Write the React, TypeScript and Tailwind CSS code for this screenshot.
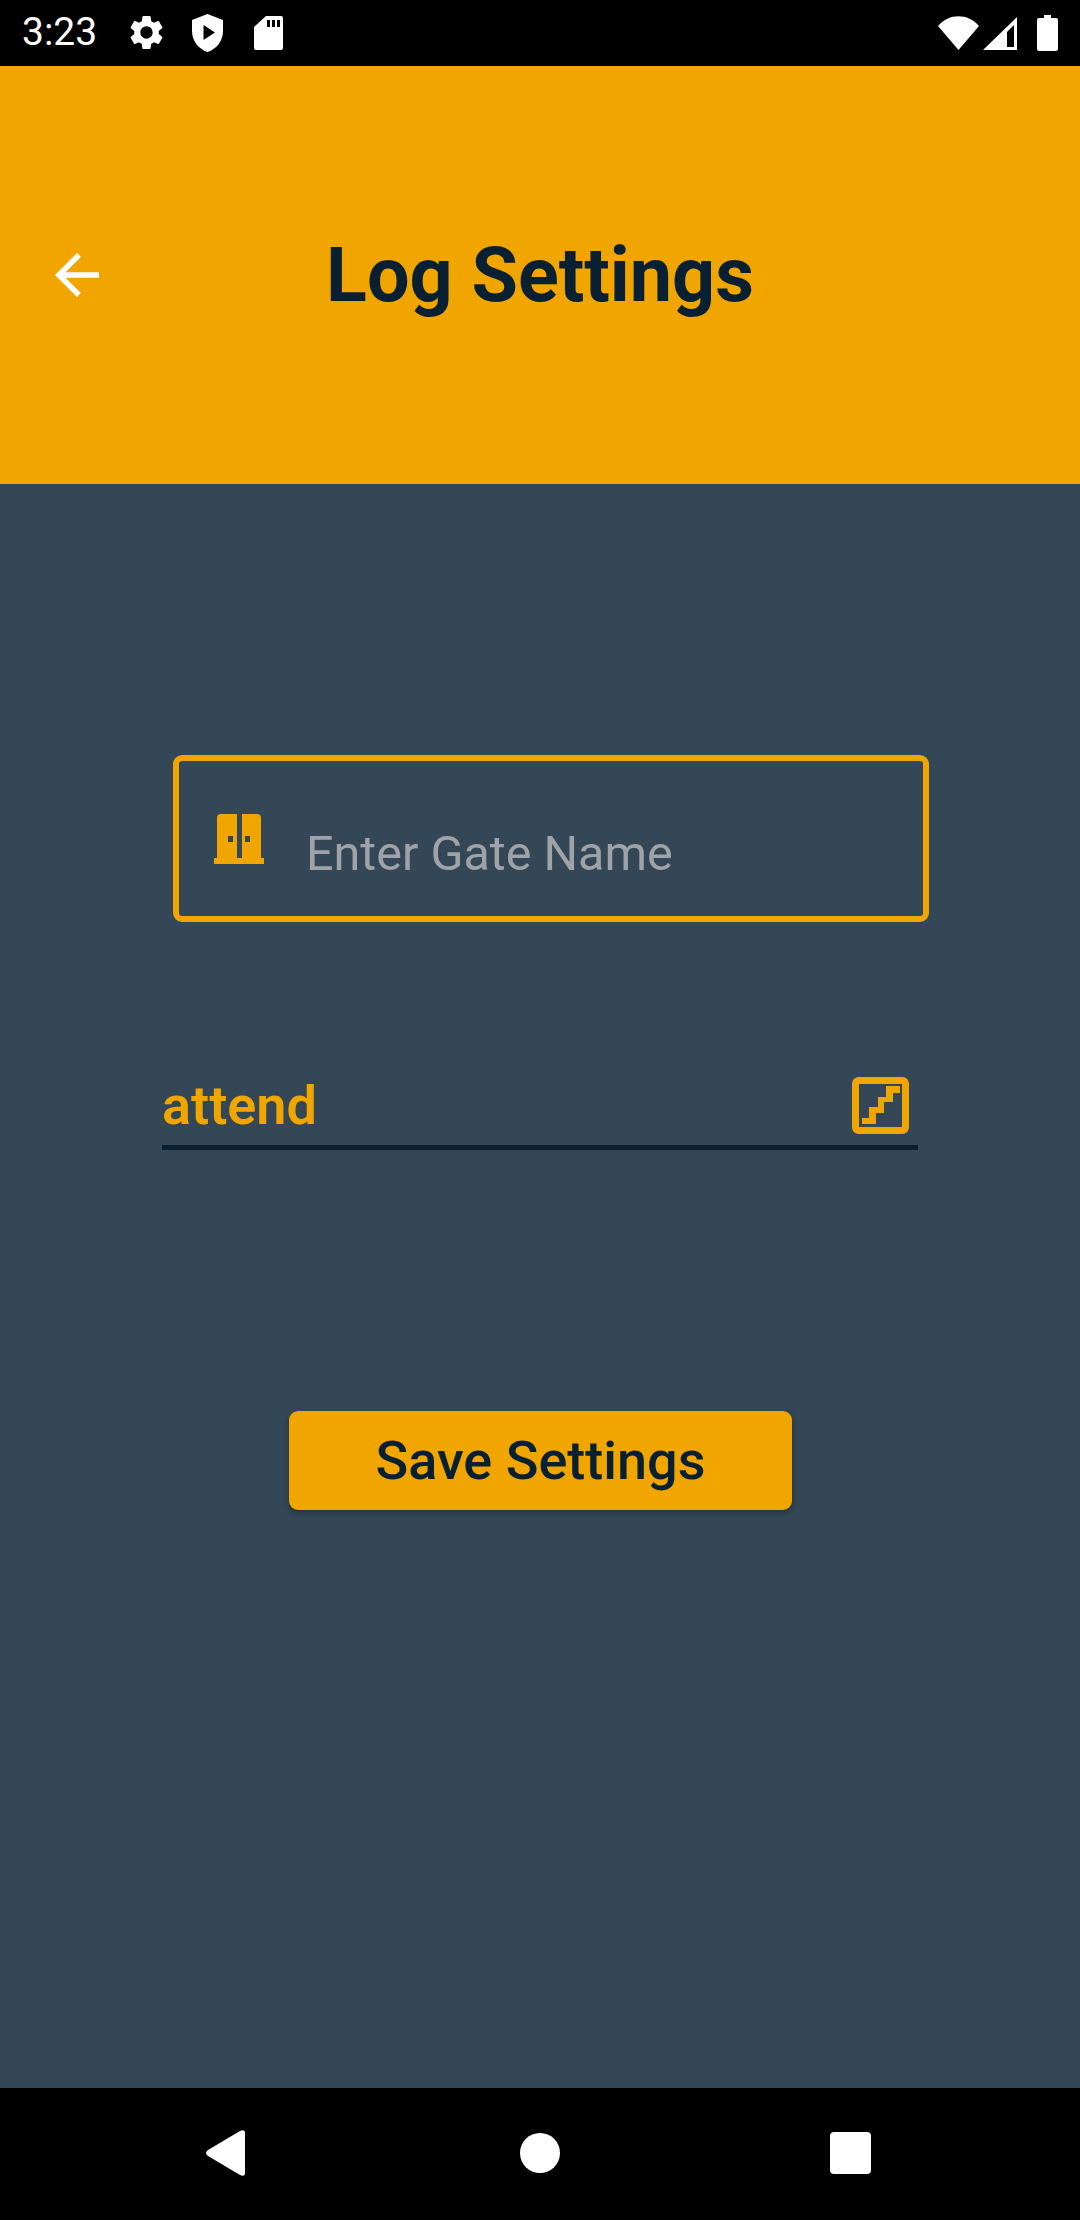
export default function App() {
  return (
    <div className="flex flex-col h-[2220px] w-[1080px] bg-[#334756] overflow-hidden font-['Roboto',sans-serif]">
      <div className="h-[66px] bg-black flex items-center text-white">
        <span className="ml-[22px] text-[39px] leading-none w-[108px] mt-[-1px]">3:23</span>
        <svg viewBox="0 0 24 24" className="w-[41px] h-[41px] ml-[-4px] mt-[-1px]" fill="#fff">
          <path d="M19.14,12.94c0.04-0.3,0.06-0.61,0.06-0.94c0-0.32-0.02-0.64-0.07-0.94l2.03-1.58c0.18-0.14,0.23-0.41,0.12-0.61 l-1.92-3.32c-0.12-0.22-0.37-0.29-0.59-0.22l-2.39,0.96c-0.5-0.38-1.03-0.7-1.62-0.94L14.4,2.81c-0.04-0.24-0.24-0.41-0.48-0.41 h-3.84c-0.24,0-0.43,0.17-0.47,0.41L9.25,5.35C8.66,5.59,8.12,5.92,7.63,6.29L5.24,5.33c-0.22-0.08-0.47,0-0.59,0.22L2.74,8.87 C2.62,9.08,2.66,9.34,2.86,9.48l2.03,1.58C4.84,11.36,4.8,11.69,4.8,12s0.02,0.64,0.07,0.94l-2.03,1.58 c-0.18,0.14-0.23,0.41-0.12,0.61l1.92,3.32c0.12,0.22,0.37,0.29,0.59,0.22l2.39-0.96c0.5,0.38,1.03,0.7,1.62,0.94l0.36,2.54 c0.05,0.24,0.24,0.41,0.48,0.41h3.84c0.24,0,0.44-0.17,0.47-0.41l0.36-2.54c0.59-0.24,1.13-0.56,1.62-0.94l2.39,0.96 c0.22,0.08,0.47,0,0.59-0.22l1.92-3.32c0.12-0.22,0.07-0.47-0.12-0.61L19.14,12.94z M12,15.6c-1.98,0-3.6-1.62-3.6-3.6 s1.62-3.6,3.6-3.6s3.6,1.62,3.6,3.6S13.98,15.6,12,15.6z" />
        </svg>
        <svg viewBox="0 0 31 38" className="w-[31px] h-[38px] ml-[25px]" fill="#fff">
          <path fillRule="evenodd" d="M15.5 0 L31 6 V17 C31 27 24.5 35 15.5 38 C6.5 35 0 27 0 17 V6 Z M11.5 11 V26 L23 18.5 Z" />
        </svg>
        <svg viewBox="0 0 29 34" className="w-[29px] h-[34px] ml-[31px]" fill="#fff">
          <path fillRule="evenodd" d="M27 0 H12 L0 11 V32 a2 2 0 0 0 2 2 H27 a2 2 0 0 0 2 -2 V2 a2 2 0 0 0 -2 -2 Z M13 4 h3 v7 h-3 Z M18 4 h3 v7 h-3 Z M23 4 h3 v7 h-3 Z" />
        </svg>
        <div className="flex-1" />
        <svg viewBox="0 0 41 34" className="w-[41px] h-[34px]" fill="#fff">
          <path d="M0 10 C11 -3 30 -3 41 10 L20.5 34 Z" />
        </svg>
        <svg viewBox="0 0 34 33" className="w-[34px] h-[33px] ml-[4px]" fill="#fff">
          <path fillRule="evenodd" d="M34 0 V33 H0 Z M31 8 L24 15 V30 H31 Z" />
        </svg>
        <svg viewBox="0 0 21 36" className="w-[21px] h-[36px] ml-[20px] mr-[22px]" fill="#fff">
          <path d="M7 0 H14 V3 H19 a2 2 0 0 1 2 2 V34 a2 2 0 0 1 -2 2 H2 a2 2 0 0 1 -2 -2 V5 a2 2 0 0 1 2 -2 H7 Z" />
        </svg>
      </div>

      <div className="h-[418px] bg-[#f0a500] relative flex items-center justify-center">
        <svg viewBox="0 0 24 24" className="absolute left-[44px] top-[176px] w-[66px] h-[66px]" fill="#fff">
          <path d="M20 11H7.83l5.59-5.59L12 4l-8 8 8 8 1.41-1.41L7.83 13H20v-2z" />
        </svg>
        <h1 className="text-[75.5px] leading-none font-bold text-[#082032] mt-[2px]">Log Settings</h1>
      </div>

      <main className="flex-1 flex flex-col">
        <div className="ml-[173px] mt-[271px] w-[756px] h-[167px] border-[6px] border-[#f0a500] rounded-[9px] flex items-start">
          <svg viewBox="0 0 50 50" className="w-[50px] h-[50px] ml-[35px] mt-[53px] shrink-0" fill="#f0a500">
            <path fillRule="evenodd" d="M3 44 V4 a4 4 0 0 1 4 -4 H23 V44 Z M14 22 v6 h5 v-6 Z" />
            <path fillRule="evenodd" d="M28 44 V0 H43 a4 4 0 0 1 4 4 V44 Z M31 22 v6 h5 v-6 Z" />
            <rect x="0" y="44" width="50" height="6" />
          </svg>
          <span className="ml-[42px] mt-[63px] text-[48.5px] leading-[60px] text-[#9fa3a7]">Enter Gate Name</span>
        </div>

        <div className="ml-[162px] mt-[146px] w-[756px] h-[82px] border-b-[5px] border-[#082032] flex items-center justify-between pb-[2px]">
          <span className="text-[54px] leading-none font-semibold text-[#f0a500]">attend</span>
          <svg viewBox="0 0 57 57" className="w-[57px] h-[57px] mr-[9px]">
            <rect x="3.5" y="3.5" width="50" height="50" rx="3" fill="none" stroke="#f0a500" strokeWidth="7" />
            <path d="M10 47 V41 H17 V30 H26 V20 H34 V9 H48 V16 H41 V25 H32 V36 H24 V47 Z" fill="#f0a500" />
          </svg>
        </div>

        <div className="mt-[261px] ml-[289px] w-[503px] h-[99px] bg-[#f0a500] rounded-[9px] shadow-[0_3px_6px_rgba(0,0,0,0.3)] flex items-center justify-center">
          <span className="text-[54px] leading-none font-medium text-[#082032]">Save Settings</span>
        </div>
      </main>

      <div className="h-[132px] bg-black relative flex items-center pb-[2px]">
        <svg viewBox="0 0 40 46" className="w-[40px] h-[46px] ml-[206px]" fill="#fff">
          <path d="M2 20 L34 1 Q39 -1 39 3 V43 Q39 47 34 45 L2 26 Q-2 23 2 20 Z" />
        </svg>
        <div className="w-[40px] h-[40px] rounded-full bg-white ml-[274px]" />
        <div className="w-[41px] h-[42px] rounded-[4px] bg-white ml-[270px]" />
      </div>
    </div>
  );
}
